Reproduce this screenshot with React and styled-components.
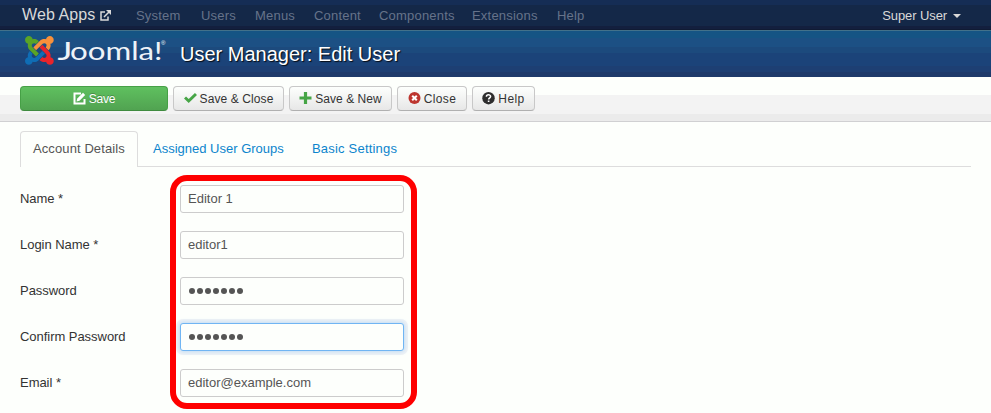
import React from "react";
import styled, { createGlobalStyle } from "styled-components";

const Global = createGlobalStyle`
  * { box-sizing: border-box; }
  html, body { margin: 0; height: 413px; overflow: hidden; }
  body {
    background: #fdfffc;
    color: #333;
    font: 13px/18px "Liberation Sans", Arial, sans-serif;
  }
`;

const NavBar = styled.nav`
  height: 30px;
  display: flex;
  align-items: center;
  padding: 0 30px 0 22px;
  background: linear-gradient(#152d55 0 5px, #142848 5px 26px, #131f3e 26px 29px, #101b34 29px);
`;
const Brand = styled.a`
  display: flex;
  align-items: center;
  gap: 5px;
  width: 114px;
  color: #d9d9d9;
  font-size: 16px;
  letter-spacing: 0.1px;
`;
const NavItem = styled.a`
  width: ${(p) => p.$w}px;
  padding-top: 2px;
  color: #66738a;
  white-space: nowrap;
  letter-spacing: ${(p) => p.$ls ?? 0.2}px;
`;
const UserMenu = styled.a`
  display: flex;
  align-items: center;
  gap: 6px;
  margin-left: auto;
  padding-top: 2px;
  color: #d9d9d9;
  letter-spacing: -0.1px;
`;
const Caret = styled.span`
  border: 4px solid transparent;
  border-top-color: #d9d9d9;
  border-bottom: 0;
`;
const Header = styled.header`
  height: 47px;
  display: flex;
  align-items: center;
  padding-left: 20px;
  border-top: 1px solid #42718a;
  background: linear-gradient(#155484 0 7px, #1c5084 7px 16px, #1c4a7d 16px 22px, #1b4379 22px 35px, #1d3f73 35px 41px, #1e3a6a 41px);
`;
const Title = styled.h1`
  margin: 0 0 0 10px;
  color: #fff;
  font-size: 20px;
  line-height: 24px;
  font-weight: 400;
  text-shadow: 1px 1px 1px rgba(0, 0, 0, 0.85);
`;
const Toolbar = styled.div`
  height: 45px;
  display: flex;
  align-items: flex-start;
  gap: 5px;
  padding: 9px 20px 0;
  border-bottom: 1px solid #d0d0d2;
  background: linear-gradient(#fdfffc 0 18px, #f3f3f3 18px 37px, #ebebeb 37px);
`;
const Button = styled.button`
  width: ${(p) => p.$w}px;
  height: 25px;
  display: flex;
  align-items: center;
  justify-content: center;
  gap: 3px;
  padding: 0;
  border: 1px solid ${(p) => (p.$primary ? "#46a046" : "#c8c8c8")};
  border-bottom-color: ${(p) => (p.$primary ? "#3f8b3f" : "#b0b0b0")};
  border-radius: 4px;
  background: ${(p) => (p.$primary ? "linear-gradient(#5fc05f, #51a351)" : "linear-gradient(#fdfffd, #e7e7e7)")};
  color: ${(p) => (p.$primary ? "#fff" : "#333")};
  font: inherit;
  font-size: 12px;
  letter-spacing: ${(p) => p.$ls ?? 0}px;
  white-space: nowrap;
  text-shadow: ${(p) => (p.$primary ? "0 -1px 0 rgba(0,0,0,.25)" : "none")};
`;
const Tabs = styled.div`
  height: 36px;
  display: flex;
  margin: 9px 20px 0;
  border-bottom: 1px solid #ddd;
`;
const Tab = styled.a`
  width: ${(p) => p.$w}px;
  height: 36px;
  margin-right: 2px;
  padding: 8px 12px;
  border: 1px solid ${(p) => (p.$active ? "#ddd" : "transparent")};
  border-bottom: 0;
  border-radius: 4px 4px 0 0;
  background: ${(p) => (p.$active ? "#fdfffc" : "transparent")};
  color: ${(p) => (p.$active ? "#555" : "#0c85cd")};
  letter-spacing: ${(p) => p.$ls}px;
  white-space: nowrap;
`;
const Form = styled.form`
  position: relative;
  display: grid;
  gap: 18px;
  padding: 18px 20px 0;
`;
const Row = styled.div`
  display: grid;
  grid-template-columns: 160px 224px;
`;
const Label = styled.label`
  padding-top: 5px;
  letter-spacing: -0.04px;
`;
const Field = styled.div`
  height: 28px;
  padding: 4px 7px;
  border: 1px solid ${(p) => (p.$focus ? "#70b5f3" : "#ccc")};
  border-radius: 3px;
  background: #fdfffc;
  box-shadow: ${(p) => (p.$focus ? "0 0 4px 1px #bfdcf5, 0 0 0 4px #f1f3f5" : "none")};
  color: #555;
`;
const Dots = styled.div`
  display: flex;
  gap: 2px;
  padding: 6px 0 0 1px;
`;
const Dot = styled.span`
  width: 6px;
  height: 6px;
  border-radius: 50%;
  background: #555;
`;
const Highlight = styled.div`
  position: absolute;
  left: 170px;
  top: 8px;
  width: 247px;
  height: 234px;
  border: 6px solid #fe0000;
  border-radius: 17px;
  pointer-events: none;
`;

const ExternalIcon = () => (
  <svg width="11" height="11" viewBox="0 0 11 11" fill="none" stroke="#d9d9d9" strokeWidth="1.5">
    <path d="M5 2H1v8h7V6.5M4 7l5-5" />
    <path d="M6 0h5v5z" fill="#d9d9d9" stroke="none" />
  </svg>
);
const EditIcon = () => (
  <svg width="13" height="13" viewBox="0 0 13 13" fill="none" stroke="#fff">
    <path d="M8 1.5H1.5v10h10V7" strokeWidth="2" />
    <path d="M3.5 9.5l.8-3L10 .8 12.2 3 6.5 8.7z" fill="#fff" stroke="none" />
  </svg>
);
const CheckIcon = () => (
  <svg width="13" height="13" viewBox="0 0 13 13">
    <path d="M1 5.500l3.700 3.500L12 2" fill="none" stroke="#46a546" strokeWidth="3" />
  </svg>
);
const PlusIcon = () => (
  <svg width="13" height="13" viewBox="0 0 13 13">
    <path d="M6.500 0v12M.5 6h12" stroke="#46a546" strokeWidth="3.200" />
  </svg>
);
const CloseIcon = () => (
  <svg width="13" height="13" viewBox="0 0 13 13">
    <circle cx="6.500" cy="6" r="6" fill="#bd362f" />
    <path d="M4.200 3.700l4.600 4.600M8.800 3.700L4.200 8.300" stroke="#fff" strokeWidth="2" />
  </svg>
);
const HelpIcon = () => (
  <svg width="13" height="13" viewBox="0 0 13 13">
    <circle cx="6.500" cy="6.200" r="6.200" fill="#2d2d2d" />
    <path d="M4.400 4.700c0-2.500 4.200-2.500 4.200-.1 0 1.500-2 1.300-2 2.800" fill="none" stroke="#fff" strokeWidth="1.500" />
    <path d="M5.800 8.500h1.600V10H5.800z" fill="#fff" />
  </svg>
);

const Logo = () => (
  <svg width="150" height="46" viewBox="20 31 150 46">
    <g transform="translate(25 34) scale(.0642)">
      <path fill="#5aa426" d="M.6 92.1C.6 58.8 27.4 32 60.4 32c30 0 54.5 21.9 59.2 50.2 32.6-7.6 67.1.6 96.5 30l-44.3 44.3c-20.5-20.5-42.6-16.3-55.4-3.500-14.300 14.300-14.300 37.900 0 52.200l99.500 99.500-44 44.300c-87.700-87.200-49.700-49.700-99.800-99.700-26.800-26.500-35-64.800-24.800-98.900C20.400 144.600.6 120.700.6 92.100z" />
      <path fill="#f9913a" d="M130.100 208.500l44.300 44.300c10-10 89.700-89.700 99.700-99.800 14.300-14.300 37.600-14.300 51.900 0 12.800 12.800 17 35-3.500 55.400l44 44.300c31.200-31.200 38.500-67.600 28.900-101.200 29.200-4.100 51.900-29.200 51.900-59.500 0-33.200-26.800-60.100-59.800-60.100-30.300 0-55.400 22.500-59.500 51.600-33.800-9.900-71.700-1.500-98.300 25.100-18.300 19.100-71.100 71.500-99.600 99.900z" />
      <path fill="#e8242b" d="M396.400 360.700c8.200-32.700-.9-68.500-26.300-93.900-11.800-12.200 5 4.700-99.500-99.700l-44.300 44.300 99.700 99.700c14.300 14.300 14.300 37.600 0 51.900-12.800 12.800-35 17-55.400-3.500l-44 44.300c27.600 30.200 68 38.800 102.700 28 5.500 27.400 29.700 48.100 58.900 48.100 33 0 59.800-26.800 59.800-60.100 0-30.200-22.500-55-51.600-59.100z" />
      <path fill="#0f6db5" d="M312.100 307.600l-44-44.300c-87 86.400-50.400 50.400-99.700 99.800-14.300 14.300-37.600 14.300-51.900 0-13.100-13.400-16.900-35.300 3.200-55.400l-44-44.300c-30.200 30.200-38 65.200-29.500 98.300-26.700 6-46.200 29.900-46.200 58.200C0 453.200 26.800 480 59.800 480c28.600 0 52.500-19.800 58.600-46.700 32.700 8.200 68.500-.6 94.200-26 32.100-32 12.200-12.400 99.500-99.700z" />
    </g>
    <g fill="#eef3f8" fontFamily="Lato, sans-serif" fontSize="25">
      <text x="57.500" y="60" textLength="15" lengthAdjust="spacingAndGlyphs">J</text>
      <text x="70" y="60" textLength="92.500" lengthAdjust="spacingAndGlyphs">oomla!</text>
    </g>
    <text x="161" y="45" fill="#fff" fontFamily="Liberation Sans, sans-serif" fontSize="6">®</text>
  </svg>
);

const navItems = [
  ["System", 65], ["Users", 54], ["Menus", 59], ["Content", 65],
  ["Components", 93], ["Extensions", 85], ["Help", 40],
];
const dots = <Dots>{Array.from({ length: 7 }, (_, i) => <Dot key={i} />)}</Dots>;
const rows = [
  ["Name *", "Editor 1"],
  ["Login Name *", "editor1"],
  ["Password", dots],
  ["Confirm Password", dots, true],
  ["Email *", "editor@example.com"],
];

export default function App() {
  return (
    <>
      <Global />
      <NavBar>
        <Brand>Web Apps <ExternalIcon /></Brand>
        {navItems.map(([name, w]) => <NavItem key={name} $w={w}>{name}</NavItem>)}
        <UserMenu>Super User <Caret /></UserMenu>
      </NavBar>
      <Header>
        <Logo />
        <Title>User Manager: Edit User</Title>
      </Header>
      <Toolbar>
        <Button $w={148} $ls={-0.2} $primary><EditIcon />Save</Button>
        <Button $w={111} $ls={0.1}><CheckIcon />Save &amp; Close</Button>
        <Button $w={103} $ls={0.05}><PlusIcon />Save &amp; New</Button>
        <Button $w={70} $ls={0.35}><CloseIcon />Close</Button>
        <Button $w={63} $ls={0.4}><HelpIcon />Help</Button>
      </Toolbar>
      <Tabs>
        <Tab $w={118} $ls={0.1} $active>Account Details</Tab>
        <Tab $w={157} $ls={0}>Assigned User Groups</Tab>
        <Tab $w={112} $ls={0.2}>Basic Settings</Tab>
      </Tabs>
      <Form>
        {rows.map(([label, value, focus]) => (
          <Row key={label}>
            <Label>{label}</Label>
            <Field $focus={focus}>{value}</Field>
          </Row>
        ))}
        <Highlight />
      </Form>
    </>
  );
}
